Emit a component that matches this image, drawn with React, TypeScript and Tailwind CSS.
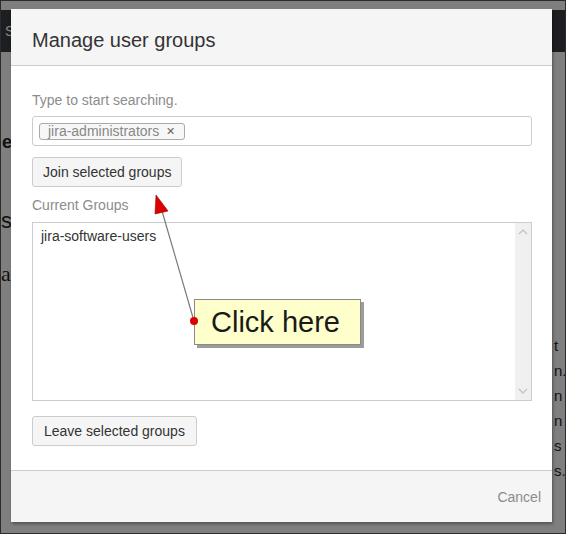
import React from 'react';

const font = { fontFamily: '"Liberation Sans", Arial, sans-serif' };

const Scrollbar: React.FC = () => (
    <div className="w-[16px] h-full bg-[#f0f0f0] flex flex-col items-center justify-between py-[6px] text-[#c4c4c4]">
        <svg width="10" height="6" viewBox="0 0 10 6"><path d="M1 5 L5 1 L9 5" fill="none" stroke="currentColor" strokeWidth="1.4" /></svg>
        <svg width="10" height="6" viewBox="0 0 10 6"><path d="M1 1 L5 5 L9 1" fill="none" stroke="currentColor" strokeWidth="1.4" /></svg>
    </div>
);

const App: React.FC = () => {
    return (
        <div className="relative w-[566px] h-[534px] overflow-hidden bg-[#7f7f7f] border border-[#2b2b2b]" style={font}>
            {/* dimmed page behind the dialog */}
            <div className="mt-[9px] h-[42px] bg-[#1d1e21] flex items-center px-[4px]">
                <span className="text-[14px] text-[#8a8a8a]">S</span>
            </div>
            <div className="absolute left-[1px] top-[128px] text-[18px] font-bold text-[#111]">e</div>
            <div className="absolute left-0 top-[203px] text-[22px] text-[#111]">s</div>
            <div className="absolute left-0 top-[256px] text-[22px] text-[#111]" style={{ fontFamily: '"Liberation Serif", serif' }}>ati</div>
            <div className="absolute left-[553px] top-[332px] flex flex-col text-[15px] leading-[25px] text-[#111]">
                <span>t</span>
                <span>n.</span>
                <span>n</span>
                <span>n</span>
                <span>s</span>
                <span>s.</span>
            </div>

            {/* dialog */}
            <div className="absolute left-[10px] top-[8px] w-[541px] h-[513px] bg-white flex flex-col shadow-[1px_2px_3px_rgba(0,0,0,0.35)]">
                <div className="h-[57px] shrink-0 bg-[#f5f5f5] border-b border-[#cccccc] flex items-center px-[21px] pt-[5px]">
                    <h2 className="text-[20px] text-[#333333] leading-[24px]">Manage user groups</h2>
                </div>
                <div className="flex-1 flex flex-col px-[21px] pt-[24px]">
                    <label className="text-[14px] leading-[20px] text-[#8c8c8c]">Type to start searching.</label>
                    <div className="mt-[6px] h-[30px] w-[500px] border border-[#cccccc] rounded-[3px] flex items-center px-[6px]">
                        <span className="h-[17px] flex items-center gap-[7px] pl-[8px] pr-[9px] border border-[#aaaaaa] rounded-[3px] bg-[#f7f7f7] text-[14px] text-[#888888] leading-[16px]">
                            jira-administrators
                            <span className="text-[11px] text-[#666666]">✕</span>
                        </span>
                    </div>
                    <div className="mt-[11px]">
                        <button className="h-[30px] px-[10px] bg-[#f5f5f5] border border-[#cccccc] rounded-[3px] text-[14px] text-[#333333]">Join selected groups</button>
                    </div>
                    <label className="mt-[8px] text-[14px] leading-[20px] text-[#8c8c8c]">Current Groups</label>
                    <div className="mt-[7px] h-[179px] w-[500px] border border-[#cccccc] flex">
                        <div className="flex-1 pl-[8px] pt-[3px] text-[14px] leading-[20px] text-[#333333]">jira-software-users</div>
                        <Scrollbar />
                    </div>
                    <div className="mt-[15px]">
                        <button className="h-[30px] px-[11px] bg-[#f5f5f5] border border-[#cccccc] rounded-[3px] text-[14px] text-[#333333]">Leave selected groups</button>
                    </div>
                </div>
                <div className="h-[52px] shrink-0 bg-[#f5f5f5] border-t border-[#cccccc] flex items-center justify-end pr-[11px] pt-[2px]">
                    <span className="text-[14px] text-[#8c8c8c]">Cancel</span>
                </div>
            </div>

            {/* annotation */}
            <div className="absolute left-[193px] top-[298px] w-[167px] h-[46px] bg-[#ffffcc] border border-[#8a8a8a] shadow-[3px_3px_0_rgba(90,90,90,0.6)] flex items-center pl-[16px]">
                <span className="text-[29px] leading-[30px] text-[#1a1a1a]">Click here</span>
            </div>
            <svg className="absolute left-0 top-0 pointer-events-none" width="566" height="534" viewBox="0 0 566 534">
                <line x1="193" y1="320" x2="161" y2="210" stroke="#7a7a7a" strokeWidth="1.2" />
                <polygon points="155,194 154,213 167,210" fill="#dd0000" stroke="#990000" strokeWidth="0.6" />
                <circle cx="193" cy="320" r="4" fill="#dd0000" />
            </svg>
        </div>
    );
};

export default App;
